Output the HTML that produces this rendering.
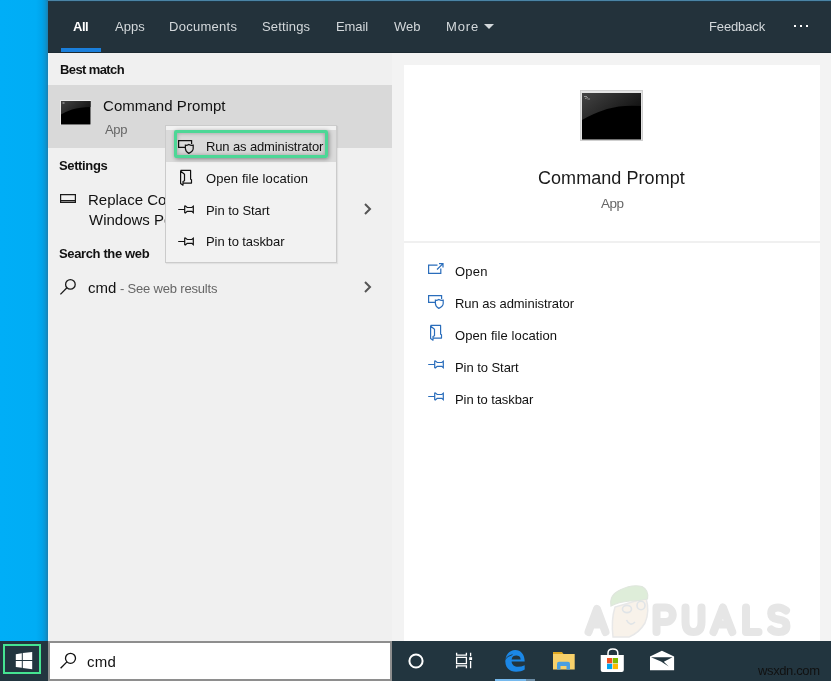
<!DOCTYPE html>
<html><head><meta charset="utf-8">
<style>
*{margin:0;padding:0;box-sizing:border-box}
html,body{width:831px;height:681px;overflow:hidden;-webkit-font-smoothing:antialiased;background:#f0f0f0;font-family:"Liberation Sans",sans-serif}
.a,.x{position:absolute;white-space:nowrap}
.x{line-height:30px;z-index:2;will-change:transform}
#m1,#m2,#m3,#m4{z-index:7}
#desk{left:0;top:0;width:48px;height:641px;background:linear-gradient(90deg,#00aef7 0px,#00adf5 36px,#00a3ea 42px,#0898d6 45px,#1a80b2 48px)}
#hdr{left:48px;top:0;width:783px;height:53px;background:#23323b;border-top:1px solid #4a84a5;box-shadow:inset 0 1px 0 #1d3747;border-bottom:1px solid #1c2a32}
#panel{left:48px;top:53px;width:344px;height:588px;background:#f0f0f0;border-left:1px solid #e4f7fd}
#right{left:392px;top:53px;width:439px;height:588px;background:#f3f3f3}
#card{left:404px;top:65px;width:416px;height:576px;background:#fff}
#sep{left:404px;top:241px;width:416px;height:2px;background:#f0f0f0}
#sel{left:48px;top:85px;width:344px;height:63px;background:#d9d9d9}
#menu{left:165px;top:125px;width:172px;height:138px;background:#f2f2f2;border:1px solid #cbcbcb;z-index:5;box-shadow:1px 1px 1px rgba(0,0,0,.06)}
#hovrow{left:166px;top:130px;width:170px;height:32px;background:#dadada;z-index:5}
#hov{left:174px;top:130px;width:154px;height:28px;border:3px solid #4dd796;border-radius:2px;z-index:6;box-shadow:1px 1px 4px rgba(0,0,0,.4),inset 0 0 4px rgba(0,0,0,.3)}
#task{left:0;top:641px;width:831px;height:40px;background:#22353f}
#sbox{left:48px;top:641px;width:344px;height:40px;background:#fff;border:2px solid #8e8e8e}
svg{position:absolute;overflow:visible}
</style></head><body>
<div class="a" id="desk"></div>
<div class="a" id="hdr"></div>
<div class="a" style="left:61px;top:48px;width:40px;height:4px;background:#1a7fdb"></div>
<svg style="left:484px;top:24px" width="10" height="5"><path d="M0 0H10L5 5Z" fill="#d3d8db"/></svg>
<div class="a" style="left:794px;top:25px;width:2px;height:2px;background:#fff"></div>
<div class="a" style="left:800px;top:25px;width:2px;height:2px;background:#fff"></div>
<div class="a" style="left:806px;top:25px;width:2px;height:2px;background:#fff"></div>

<div class="a" id="panel"></div>
<div class="a" id="right"></div>
<div class="a" id="card"></div>
<div class="a" id="sep"></div>
<div class="a" id="sel"></div>

<!-- small cmd icon -->
<svg style="left:60px;top:100px" width="31" height="25"><defs><linearGradient id="gs" x1="0" y1="0" x2="1" y2="0.6"><stop offset="0" stop-color="#444"/><stop offset="1" stop-color="#111"/></linearGradient></defs><rect x="0" y="0" width="31" height="25" fill="#ececec"/><rect x="1" y="1" width="29.5" height="23.5" fill="#000"/><path d="M1 1H30.5V7Q20 7 12 9.5Q5 12 1 14.5Z" fill="url(#gs)"/><rect x="2.5" y="2.5" width="2" height="1" fill="#bbb"/></svg>

<!-- display icon -->
<svg style="left:60px;top:194px" width="16" height="9"><path d="M0.6 0.6H15.4V8.4H0.6Z M1 6.6H15" fill="none" stroke="#1a1a1a" stroke-width="1.2"/></svg>
<svg style="left:364px;top:203px" width="8" height="12"><path d="M1 1L6 6L1 11" fill="none" stroke="#555" stroke-width="2"/></svg>

<!-- search icon -->
<svg style="left:60px;top:280px" width="16" height="15"><circle cx="10.4" cy="4.4" r="4.8" fill="none" stroke="#1a1a1a" stroke-width="1.3"/><line x1="6.9" y1="7.8" x2="0.4" y2="14.4" stroke="#1a1a1a" stroke-width="1.3"/></svg>
<svg style="left:364px;top:281px" width="8" height="12"><path d="M1 1L6 6L1 11" fill="none" stroke="#555" stroke-width="2"/></svg>

<!-- context menu -->
<div class="a" id="menu"></div>
<div class="a" id="hovrow"></div>
<div class="a" id="hov"></div>
<svg style="left:178px;top:140px;z-index:7" width="17" height="14"><path d="M7 7.3H0.6V0.6H13.6V4" fill="none" stroke="#111" stroke-width="1.2"/><path d="M7.4 5.2Q9 5.6 10.8 4.4Q12.6 5.6 15.2 5.2V8.6Q15.2 11.6 10.8 13.4Q7.4 11.6 7.4 8.6Z" fill="none" stroke="#111" stroke-width="1.2"/></svg>
<svg style="left:180px;top:170px;z-index:7" width="13" height="16"><path d="M0.6 0.4H10.6V9.2L11.5 9.7V13.1H3.6 M0.6 0.4V13.4L3 15.2V11.5L4.5 10.8V4.3L0.8 1.3" fill="none" stroke="#111" stroke-width="1.2" stroke-linejoin="round"/></svg>
<svg style="left:178px;top:205px;z-index:7" width="16" height="9"><path d="M0.2 4.5H6.7 M6.7 0.4V8.3 M7 0.6L9.2 2.5H13.8L15.3 1.3V7.7L13.8 6.4H9.2L7 8.3" fill="none" stroke="#111" stroke-width="1.2"/></svg>
<svg style="left:178px;top:237px;z-index:7" width="16" height="9"><path d="M0.2 4.5H6.7 M6.7 0.4V8.3 M7 0.6L9.2 2.5H13.8L15.3 1.3V7.7L13.8 6.4H9.2L7 8.3" fill="none" stroke="#111" stroke-width="1.2"/></svg>

<!-- right card big icon -->
<svg style="left:580px;top:90px" width="63" height="51"><defs><linearGradient id="gl" x1="0" y1="0" x2="1" y2="0.6"><stop offset="0" stop-color="#444"/><stop offset="1" stop-color="#111"/></linearGradient></defs><rect x="0" y="0" width="63" height="51" fill="#e4e4e4"/><rect x="0.5" y="0.5" width="62" height="50" fill="none" stroke="#cfcfcf"/><rect x="2" y="3" width="59" height="46.5" fill="#000"/><path d="M2 3H61V16Q42 14.5 27 19Q12 24 2 30Z" fill="url(#gl)"/><path d="M4 6.5H7M5 8.5L8 7.5M7.5 9H10" stroke="#aaa" stroke-width="0.8"/></svg>

<!-- right actions icons (blue) -->
<svg style="left:428px;top:263px" width="16" height="11"><path d="M9.5 2.2H0.6V10.4H12.8V5.5 M9 6.5L15 0.6 M11 0.6H15V4.6" fill="none" stroke="#2a6dbb" stroke-width="1.2"/></svg>
<svg style="left:428px;top:295px" width="17" height="14"><path d="M7 7.3H0.6V0.6H13.6V4" fill="none" stroke="#2a6dbb" stroke-width="1.2"/><path d="M7.4 5.2Q9 5.6 10.8 4.4Q12.6 5.6 15.2 5.2V8.6Q15.2 11.6 10.8 13.4Q7.4 11.6 7.4 8.6Z" fill="none" stroke="#2a6dbb" stroke-width="1.2"/></svg>
<svg style="left:430px;top:325px" width="13" height="16"><path d="M0.6 0.4H10.6V9.2L11.5 9.7V13.1H3.6 M0.6 0.4V13.4L3 15.2V11.5L4.5 10.8V4.3L0.8 1.3" fill="none" stroke="#2a6dbb" stroke-width="1.2" stroke-linejoin="round"/></svg>
<svg style="left:428px;top:360.3px" width="16" height="9"><path d="M0.2 4.5H6.7 M6.7 0.4V8.3 M7 0.6L9.2 2.5H13.8L15.3 1.3V7.7L13.8 6.4H9.2L7 8.3" fill="none" stroke="#2a6dbb" stroke-width="1.2"/></svg>
<svg style="left:428px;top:392.3px" width="16" height="9"><path d="M0.2 4.5H6.7 M6.7 0.4V8.3 M7 0.6L9.2 2.5H13.8L15.3 1.3V7.7L13.8 6.4H9.2L7 8.3" fill="none" stroke="#2a6dbb" stroke-width="1.2"/></svg>

<!-- watermark -->
<svg style="left:0;top:0" width="831" height="681">
<g fill="none" stroke="#e6e6e6" stroke-width="8" stroke-linecap="round" stroke-linejoin="round">
<path d="M588.5 632L597 609L605.5 632M591.5 624.5H602.5"/>
<path d="M656.5 632V607.5H665.5A7.25 7.25 0 0 1 665.5 622H656.5"/>
<path d="M685.5 607.5V622Q685.5 632 693.5 632Q701.5 632 701.5 622V607.5"/>
<path d="M713.5 632L722.9 607.5L732.3 632M717.5 624.5H728.5"/>
<path d="M746 607.5V632H758.5"/>
<path d="M786 610.5Q782 607.5 778 607.5Q771.2 607.5 771.2 613.5Q771.2 618.8 778.5 619.6Q786.5 620.5 786.5 626Q786.5 632 778.5 632Q774 632 771.2 629.5"/>
</g>
<path d="M613 637Q611 620 615 607L646 598Q650 612 645 623Q639 633 629 637Z" fill="#f8f2ea" stroke="#e8e8e8" stroke-width="1.5"/>
<path d="M611 606Q609 595 620 590Q632 584 642 586.5Q649 590 647.5 599Q640 601 630 601Q618 602 611 606Z" fill="#deedd9" stroke="#dfe6dd" stroke-width="1.2"/>
<g fill="none" stroke="#e0e4e7" stroke-width="1.6"><ellipse cx="627" cy="609" rx="4.5" ry="3.6"/><ellipse cx="641" cy="605.5" rx="4" ry="4.2"/><path d="M626.5 620Q630 627 635 622"/></g>
</svg>

<!-- taskbar -->
<div class="a" id="task"></div>
<div class="a" style="left:3px;top:644px;width:38px;height:30px;border:2.5px solid #45e391"></div>
<svg style="left:15px;top:652px" width="18" height="18"><path d="M0.8 2.2L6.8 1.3V8H0.8Z M7.8 1.1L17.2 0V8H7.8Z M0.8 9H6.8V15.8L0.8 14.9Z M7.8 9H17.2V17.3L7.8 16Z" fill="#fff"/></svg>
<div class="a" id="sbox"></div>
<svg style="left:60px;top:652px" width="17" height="17"><circle cx="10.5" cy="6.3" r="5" fill="none" stroke="#111" stroke-width="1.3"/><line x1="6.9" y1="9.9" x2="0.6" y2="16.3" stroke="#111" stroke-width="1.3"/></svg>
<svg style="left:408px;top:653px" width="16" height="16"><circle cx="8" cy="8" r="6.6" fill="none" stroke="#fff" stroke-width="2"/></svg>
<svg style="left:455px;top:652px" width="18" height="17"><path d="M1.6 0.8V3.2H11.4V0.8 M1.6 5.4H11.4V11.6H1.6Z M1.6 16.2V13.8H11.4V16.2 M15.6 0.8V4.2 M15.6 9V16.2" fill="none" stroke="#fff" stroke-width="1.3"/><rect x="14.2" y="5.2" width="2.9" height="2.8" fill="#fff"/></svg>
<svg style="left:505px;top:650px" width="21" height="22"><path fill-rule="evenodd" d="M19.7 11.5C19.7 4.5 16 0 10.2 0C4.5 0 0.3 4.8 0.3 11.2C0.3 17.8 5 21.8 11 21.8C14.5 21.8 17.5 21 19.7 19.6V15.3C17.5 16.3 15.2 16.8 13 16.8C9.5 16.8 6.8 14.8 6.6 11.5ZM6.6 9.4C7 6.5 9 5.5 11.2 5.5C13.5 5.5 15.5 6.5 15.7 9.4Z" fill="#1b87e6"/><path d="M-0.3 9.8Q2.5 5.8 7.5 4.6" fill="none" stroke="#22353f" stroke-width="0.9"/></svg>
<div class="a" style="left:495px;top:679px;width:31px;height:2px;background:#76b9ed"></div>
<div class="a" style="left:526px;top:679px;width:9px;height:2px;background:#6b8ca5"></div>
<svg style="left:553px;top:652px" width="22" height="18"><path d="M0 0H9L10.5 2H0Z" fill="#e0a820"/><rect x="0" y="2" width="21.7" height="15.5" fill="#f8d16a"/><path d="M4 17.5V12Q4 9.8 6 9.8H15Q17 9.8 17 12V17.5H13.5V14H7.5V17.5Z" fill="#4a9fe0"/></svg>
<svg style="left:600px;top:648px" width="25" height="25"><path d="M8 7.5V5Q8 1 12.8 1Q17.8 1 17.8 5V7.5" fill="none" stroke="#fff" stroke-width="1.5"/><path d="M0.7 7H23.8V22Q23.8 24 21.8 24H2.7Q0.7 24 0.7 22Z" fill="#fff"/><rect x="7" y="10" width="5.2" height="5.3" fill="#f25022"/><rect x="12.8" y="10" width="5.2" height="5.3" fill="#7fba00"/><rect x="7" y="15.8" width="5.2" height="5.3" fill="#00a4ef"/><rect x="12.8" y="15.8" width="5.2" height="5.3" fill="#ffb900"/></svg>
<svg style="left:650px;top:650px" width="25" height="21"><path d="M0 6.4L11.9 0.7L24.1 6.4V20.2H0Z" fill="#fff"/><path d="M1 7.3H22.5L13.8 11.8L18.7 16.4L11 11.5Z" fill="#22353f"/></svg>
<div class="x" id="all" style="left:73.0px;top:11.9px;font-size:13px;color:#fff;font-weight:bold;letter-spacing:-0.45px">All</div>
<div class="x" id="apps" style="left:114.8px;top:11.8px;font-size:13px;color:#d3d8db;letter-spacing:0.033px">Apps</div>
<div class="x" id="docs" style="left:169.4px;top:11.8px;font-size:13px;color:#d3d8db;letter-spacing:0.275px">Documents</div>
<div class="x" id="sett" style="left:262.0px;top:11.8px;font-size:13px;color:#d3d8db;letter-spacing:0.157px">Settings</div>
<div class="x" id="email" style="left:335.6px;top:11.8px;font-size:13px;color:#d3d8db;letter-spacing:-0.075px">Email</div>
<div class="x" id="web" style="left:394.1px;top:11.8px;font-size:13px;color:#d3d8db;letter-spacing:-0.05px">Web</div>
<div class="x" id="more" style="left:445.8px;top:11.8px;font-size:13px;color:#d3d8db;letter-spacing:0.9px">More</div>
<div class="x" id="fb" style="left:709.4px;top:11.9px;font-size:13px;color:#d3d8db;letter-spacing:-0.129px">Feedback</div>
<div class="x" id="best" style="left:60.0px;top:54.5px;font-size:13px;color:#111;font-weight:bold;letter-spacing:-0.611px">Best match</div>
<div class="x" id="cp" style="left:103.3px;top:90.9px;font-size:15px;color:#111;letter-spacing:0.062px">Command Prompt</div>
<div class="x" id="app" style="left:104.6px;top:115.3px;font-size:13px;color:#666;letter-spacing:-0.3px">App</div>
<div class="x" id="shd" style="left:59.3px;top:150.6px;font-size:13px;color:#111;font-weight:bold;letter-spacing:-0.371px">Settings</div>
<div class="x" id="rep" style="left:87.8px;top:184.6px;font-size:15px;color:#111">Replace Command</div>
<div class="x" id="win" style="left:88.8px;top:204.5px;font-size:15px;color:#111">Windows PowerShell</div>
<div class="x" id="stw" style="left:59.4px;top:238.8px;font-size:13px;color:#111;font-weight:bold;letter-spacing:-0.369px">Search the web</div>
<div class="x" id="cmd" style="left:87.6px;top:273.0px;font-size:15px;color:#111">cmd</div>
<div class="x" id="swr" style="left:120.0px;top:274.0px;font-size:13px;color:#666;letter-spacing:-0.188px">- See web results</div>
<div class="x" id="m1" style="left:205.9px;top:131.7px;font-size:13px;color:#111;letter-spacing:-0.132px">Run as administrator</div>
<div class="x" id="m2" style="left:205.6px;top:164.0px;font-size:13px;color:#111;letter-spacing:0.094px">Open file location</div>
<div class="x" id="m3" style="left:205.6px;top:195.6px;font-size:13px;color:#111;letter-spacing:-0.064px">Pin to Start</div>
<div class="x" id="m4" style="left:205.6px;top:227.2px;font-size:13px;color:#111;letter-spacing:-0.077px">Pin to taskbar</div>
<div class="x" id="rcp" style="left:538.2px;top:162.5px;font-size:18px;color:#1a1a1a;letter-spacing:0.054px">Command Prompt</div>
<div class="x" id="rapp" style="left:600.6px;top:189.1px;font-size:13.5px;color:#666;letter-spacing:-0.55px">App</div>
<div class="x" id="r1" style="left:455.4px;top:256.9px;font-size:13px;color:#111;letter-spacing:0.233px">Open</div>
<div class="x" id="r2" style="left:455.4px;top:288.8px;font-size:13px;color:#111;letter-spacing:-0.047px">Run as administrator</div>
<div class="x" id="r3" style="left:455.4px;top:320.8px;font-size:13px;color:#111;letter-spacing:0.094px">Open file location</div>
<div class="x" id="r4" style="left:455.4px;top:352.6px;font-size:13px;color:#111;letter-spacing:-0.055px">Pin to Start</div>
<div class="x" id="r5" style="left:455.4px;top:384.5px;font-size:13px;color:#111;letter-spacing:-0.092px">Pin to taskbar</div>
<div class="x" id="tcmd" style="left:87.4px;top:646.8px;font-size:15px;color:#111;letter-spacing:0.3px">cmd</div>
<div class="x" id="wsx" style="left:758.0px;top:655.8px;font-size:13px;color:#111;letter-spacing:-0.375px">wsxdn.com</div>
</body></html>
